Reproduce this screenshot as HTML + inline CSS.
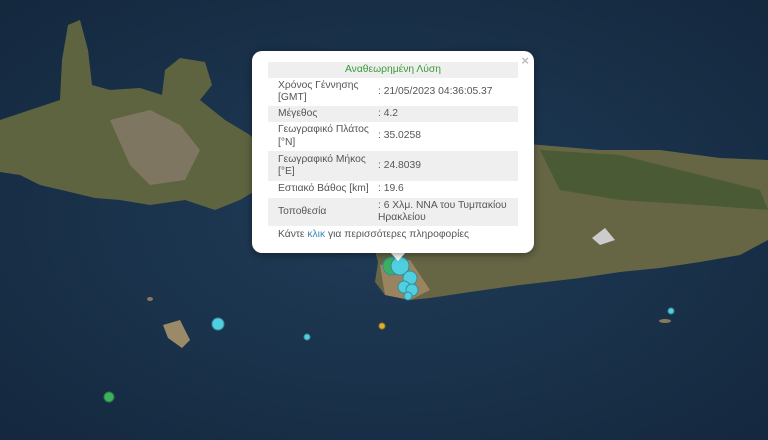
<!DOCTYPE html>
<html><head><meta charset="utf-8"><style>
html,body{margin:0;padding:0;width:768px;height:440px;overflow:hidden;background:#1a2f45;font-family:"Liberation Sans",sans-serif}
#map{position:absolute;left:0;top:0}
.pop{position:absolute;left:252px;top:51px;width:282px;height:202px;background:#fff;border-radius:10px;box-shadow:0 2px 8px rgba(0,0,0,.4)}
.tip{position:absolute;left:389px;top:251px;width:0;height:0;border-left:9px solid transparent;border-right:9px solid transparent;border-top:10px solid #fff}
.x{position:absolute;right:5px;top:2px;color:#bbb;font-size:13px;font-weight:bold}
table{position:absolute;left:16px;top:11px;width:250px;border-collapse:collapse;font-size:10.3px;color:#555;line-height:12.5px}
td{padding:0 0 0 10px;vertical-align:middle}
td.k{width:100px}
td.v{padding-left:0}
tr.g{background:#efefef}
.h{text-align:center;color:#3a9a3a;padding:0}
.more{position:absolute;left:26px;top:178px;font-size:10.3px;color:#555}
.more span{color:#3a86b8}
</style></head><body>
<svg id="map" width="768" height="440" viewBox="0 0 768 440">
<defs><radialGradient id="sea" cx="50%" cy="50%" r="70%"><stop offset="0" stop-color="#203c58"/><stop offset="1" stop-color="#14283e"/></radialGradient></defs>
<rect width="768" height="440" fill="url(#sea)"/>
<path d="M0 120 L30 110 L60 100 L62 60 L68 25 L80 20 L88 50 L92 85 L110 90 L140 88 L162 95 L165 70 L180 58 L205 62 L212 85 L200 100 L225 120 L250 135 L262 150 L255 175 L265 185 L240 200 L215 210 L185 200 L150 205 L120 200 L95 198 L70 192 L40 185 L20 175 L0 172 Z" fill="#5f6440"/>
<path d="M110 120 L150 110 L180 125 L200 150 L185 180 L150 185 L130 165 Z" fill="#7e7660"/>
<path d="M360 150 L420 145 L480 140 L540 145 L600 150 L660 150 L720 158 L768 160 L768 240 L740 255 L700 262 L660 268 L620 272 L580 278 L520 285 L470 292 L430 298 L410 300 L385 295 L375 282 L378 262 L372 240 L360 220 Z" fill="#666645"/>
<path d="M540 150 L620 155 L700 175 L760 190 L768 210 L700 205 L620 200 L560 190 Z" fill="#4a5a34"/>
<path d="M380 265 L410 260 L430 290 L410 300 L385 295 Z" fill="#9a8460"/>
<path d="M592 238 L605 228 L615 240 L600 245 Z" fill="#ccc"/>
<path d="M163 325 L180 320 L190 340 L182 348 L168 338 Z" fill="#9a8a68"/>
<ellipse cx="150" cy="299" rx="3" ry="2" fill="#8a7a5c"/>
<ellipse cx="665" cy="321" rx="6" ry="2" fill="#8a7a5c"/>
<g stroke="#3a8a9a" stroke-width="1" fill="#4fd0e0">
<circle cx="392" cy="266" r="9" fill="#3cb060"/>
<circle cx="400" cy="266" r="9"/>
<circle cx="410" cy="278" r="7"/>
<circle cx="404" cy="287" r="6"/>
<circle cx="412" cy="290" r="6"/>
<circle cx="408" cy="296" r="4"/>
<circle cx="218" cy="324" r="6"/>
<circle cx="307" cy="337" r="3"/>
<circle cx="671" cy="311" r="3"/>
<circle cx="382" cy="326" r="3" fill="#e0b030" stroke="#a07a20"/>
<circle cx="109" cy="397" r="5" fill="#3cb060" stroke="#2a7a40"/>
</g>
</svg>
<div class="tip"></div>
<div class="pop">
<div class="x">×</div>
<table>
<tr class="g" style="height:16px"><td colspan="2" class="h">Αναθεωρημένη Λύση</td></tr>
<tr style="height:28px"><td class="k">Χρόνος Γέννησης<br>[GMT]</td><td class="v">: 21/05/2023 04:36:05.37</td></tr>
<tr class="g" style="height:16px"><td class="k">Μέγεθος</td><td class="v">: 4.2</td></tr>
<tr style="height:29px"><td class="k">Γεωγραφικό Πλάτος<br>[°N]</td><td class="v">: 35.0258</td></tr>
<tr class="g" style="height:30px"><td class="k">Γεωγραφικό Μήκος<br>[°E]</td><td class="v">: 24.8039</td></tr>
<tr style="height:17px"><td class="k">Εστιακό Βάθος [km]</td><td class="v">: 19.6</td></tr>
<tr class="g" style="height:28px"><td class="k">Τοποθεσία</td><td class="v">: 6 Χλμ. ΝΝΑ του Τυμπακίου<br>Ηρακλείου</td></tr>
</table>
<div class="more">Κάντε <span>κλικ</span> για περισσότερες πληροφορίες</div>
</div>
</body></html>
